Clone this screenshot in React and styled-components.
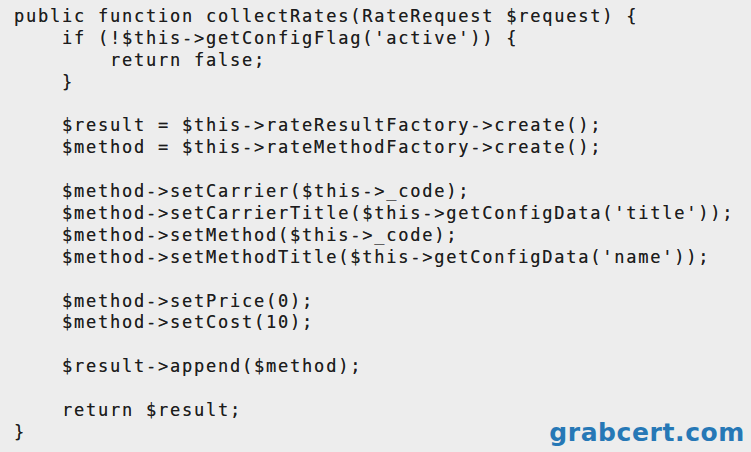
import React from "react";
import styled, { createGlobalStyle } from "styled-components";

const Global = createGlobalStyle`
  html, body { margin: 0; padding: 0; background: #ededed; }
  body { width: 751px; height: 452px; overflow: hidden; }
`;

const Screen = styled.div`
  position: relative;
  width: 751px;
  height: 452px;
  background: #ededed;
`;

const Code = styled.div`
  padding: 6px 0 0 14px;
  font-family: "DejaVu Sans Mono", "Liberation Mono", monospace;
  font-size: 17px;
  letter-spacing: 1.77px;
  line-height: 21.9px;
  color: #1c1c1c;
  text-shadow: 0 0 0.5px rgba(28, 28, 28, 0.6);
`;

const Line = styled.div`
  width: fit-content;
  height: 21.9px;
  white-space: pre;
`;

const Watermark = styled.div`
  position: absolute;
  top: 418px;
  right: 6px;
  font-family: "DejaVu Sans", sans-serif;
  font-weight: 700;
  font-size: 25px;
  letter-spacing: 0.6px;
  color: #2678b6;
`;

const lines = [
  "public function collectRates(RateRequest $request) {",
  "    if (!$this->getConfigFlag('active')) {",
  "        return false;",
  "    }",
  "",
  "    $result = $this->rateResultFactory->create();",
  "    $method = $this->rateMethodFactory->create();",
  "",
  "    $method->setCarrier($this->_code);",
  "    $method->setCarrierTitle($this->getConfigData('title'));",
  "    $method->setMethod($this->_code);",
  "    $method->setMethodTitle($this->getConfigData('name'));",
  "",
  "    $method->setPrice(0);",
  "    $method->setCost(10);",
  "",
  "    $result->append($method);",
  "",
  "    return $result;",
  "}",
];

export default function App() {
  return (
    <Screen>
      <Global />
      <Code>
        {lines.map((l, i) => (
          <Line key={i}>{l}</Line>
        ))}
      </Code>
      <Watermark>grabcert.com</Watermark>
    </Screen>
  );
}
